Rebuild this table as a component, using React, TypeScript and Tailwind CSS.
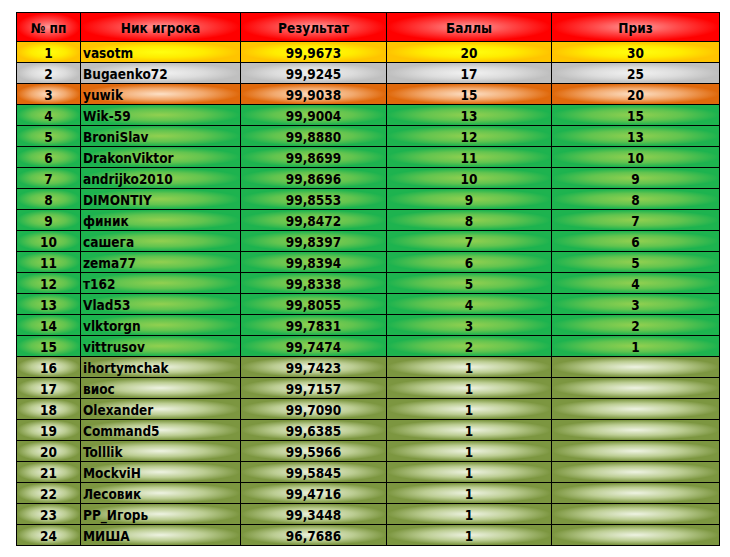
type Tone = "gold" | "silver" | "bronze" | "green" | "olive";

type Row = {
  place: number;
  nick: string;
  result: string;
  points: number;
  prize: string;
  tone: Tone;
};

const toneClass: Record<Tone, string> = {
  gold: "bg-[radial-gradient(closest-side,#ffff10_0%,#ffec00_55%,#ffc400_100%)]",
  silver: "bg-[radial-gradient(closest-side,#f2f2f2_0%,#dcdcdc_55%,#bfbfbf_100%)]",
  bronze: "bg-[radial-gradient(closest-side,#fde0c6_0%,#f2a96e_55%,#e0690c_100%)]",
  green: "bg-[radial-gradient(closest-side,#92d050_0%,#62c44f_55%,#1db34f_100%)]",
  olive: "bg-[radial-gradient(closest-side,#eef3e2_0%,#bccd93_55%,#7c9640_100%)]",
};

const rows: Row[] = [
  ["vasotm", "99,9673", 20, "30"],
  ["Bugaenko72", "99,9245", 17, "25"],
  ["yuwik", "99,9038", 15, "20"],
  ["Wik-59", "99,9004", 13, "15"],
  ["BroniSlav", "99,8880", 12, "13"],
  ["DrakonViktor", "99,8699", 11, "10"],
  ["andrijko2010", "99,8696", 10, "9"],
  ["DIMONTIY", "99,8553", 9, "8"],
  ["финик", "99,8472", 8, "7"],
  ["сашега", "99,8397", 7, "6"],
  ["zema77", "99,8394", 6, "5"],
  ["т162", "99,8338", 5, "4"],
  ["Vlad53", "99,8055", 4, "3"],
  ["vlktorgn", "99,7831", 3, "2"],
  ["vittrusov", "99,7474", 2, "1"],
  ["ihortymchak", "99,7423", 1, ""],
  ["виос", "99,7157", 1, ""],
  ["Olexander", "99,7090", 1, ""],
  ["Command5", "99,6385", 1, ""],
  ["Tolllik", "99,5966", 1, ""],
  ["MockviH", "99,5845", 1, ""],
  ["Лесовик", "99,4716", 1, ""],
  ["PP_Игорь", "99,3448", 1, ""],
  ["МИША", "96,7686", 1, ""],
].map(([nick, result, points, prize], i) => ({
  place: i + 1,
  nick: nick as string,
  result: result as string,
  points: points as number,
  prize: prize as string,
  tone: (i === 0 ? "gold" : i === 1 ? "silver" : i === 2 ? "bronze" : i < 15 ? "green" : "olive") as Tone,
}));

const cols = "grid grid-cols-[64px_160px_146px_165px_168px]";

function Cell({
  tone,
  left,
  children,
}: {
  tone: string;
  left?: boolean;
  children: React.ReactNode;
}) {
  return (
    <div
      className={`${tone} flex h-[21px] items-end border-r border-b border-black pb-[2px] leading-none ${
        left ? "justify-start pl-[2px]" : "justify-center"
      }`}
    >
      {children}
    </div>
  );
}

export default function App() {
  const head = "bg-[radial-gradient(closest-side,#ff9a9a_0%,#ff4a4a_50%,#ff0000_100%)]";
  return (
    <div className="min-h-[557px] w-[730px] bg-white pt-[12px] pl-[16px] font-['DejaVu_Sans_Condensed','DejaVu_Sans',sans-serif] text-[13.5px] font-bold text-black">
      <div className="w-[704px] border-t border-l border-black">
        <div className={cols}>
          {["№ пп", "Ник игрока", "Результат", "Баллы", "Приз"].map((t) => (
            <div
              key={t}
              className={`${head} flex h-[29px] items-center justify-center border-r border-b border-black pt-[3px] leading-none`}
            >
              {t}
            </div>
          ))}
        </div>
        {rows.map((r) => {
          const tone = toneClass[r.tone];
          return (
            <div key={r.place} className={cols}>
              <Cell tone={tone}>{r.place}</Cell>
              <Cell tone={tone} left>
                {r.nick}
              </Cell>
              <Cell tone={tone}>{r.result}</Cell>
              <Cell tone={tone}>{r.points}</Cell>
              <Cell tone={tone}>{r.prize}</Cell>
            </div>
          );
        })}
      </div>
    </div>
  );
}
